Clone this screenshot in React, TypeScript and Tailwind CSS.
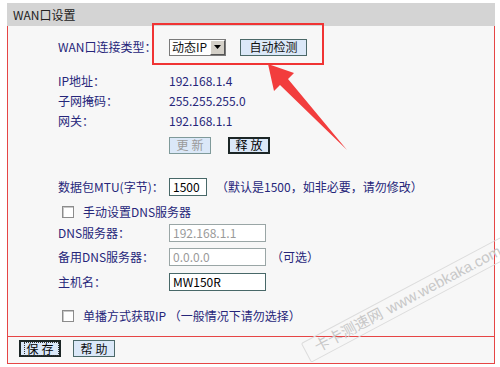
import React from 'react';

const Row: React.FC<{ label: string; className?: string; children?: React.ReactNode }> = ({ label, className = '', children }) => (
  <div className={`flex items-center h-[20px] ${className}`}>
    <div className="w-[111px] shrink-0 text-[#26267a]">{label}</div>
    {children}
  </div>
);

const Btn: React.FC<{ text: string; strong?: boolean; disabled?: boolean; focus?: boolean }> = ({ text, strong, disabled, focus }) => (
  <div
    className={`w-[42px] h-[17px] flex items-center justify-center bg-[#dbe8f8] text-[12px] tracking-[3px] pl-[3px] ${
      strong ? 'border-2 border-[#1c2626] text-black' : 'border border-[#4b6868]'
    } ${disabled ? 'text-[#9a9a9a] border-[#7f9a9a]' : 'text-[#111]'}`}
  >
    <span className={focus ? 'outline outline-1 outline-dotted outline-[#333] px-[1px] leading-[12px]' : ''}>{text}</span>
  </div>
);

const Check: React.FC = () => (
  <div className="w-[12px] h-[12px] border border-[#8c8c8c] bg-white shadow-[inset_1px_1px_0_#c8c8c8] shrink-0" />
);

export default function App() {
  return (
    <div className="relative w-[500px] h-[367px] bg-white overflow-hidden text-[12px] font-['SimSun','Noto_Sans_CJK_SC',sans-serif]">
      <div className="ml-[7px] mt-[3px] w-[488px]">
        <div className="h-[23px] bg-[#d4d4d4] pl-[6px] flex items-center text-[#222]">WAN口设置</div>
        <div className="h-[338px] bg-[#f7f7f7] border-x border-b border-[#e64545] flex flex-col">
          <div className="pl-[50px]">
            <Row label="WAN口连接类型：" className="mt-[11px]">
              <div className="w-[57px] h-[17px] bg-white border border-[#7a7a7a] flex items-center justify-between text-[#111]">
                <span className="pl-[2px]">动态IP</span>
                <div className="w-[15px] h-[15px] bg-[#d4d0c8] border border-t-white border-l-white border-r-[#555] border-b-[#555] flex items-center justify-center">
                  <svg width="7" height="4" viewBox="0 0 7 4"><path d="M0 0h7L3.5 4z" fill="#000" /></svg>
                </div>
              </div>
              <div className="ml-[14px] w-[67px] h-[17px] border border-[#4b6868] bg-[#dbe8f8] flex items-center justify-center text-[#111]">自动检测</div>
            </Row>
            <Row label="IP地址：" className="mt-[14px]"><span className="text-[#26267a]">192.168.1.4</span></Row>
            <Row label="子网掩码："><span className="text-[#26267a]">255.255.255.0</span></Row>
            <Row label="网关："><span className="text-[#26267a]">192.168.1.1</span></Row>
            <div className="flex items-center h-[20px] mt-[4px] pl-[111px] gap-[17px]">
              <Btn text="更新" disabled />
              <Btn text="释放" strong />
            </div>
            <Row label="数据包MTU(字节)：" className="mt-[22px]">
              <div className="w-[38px] h-[18px] bg-white border border-[#486868] flex items-center pl-[3px] text-black">1500</div>
              <span className="ml-[9px] text-[#26267a]">（默认是1500，如非必要，请勿修改）</span>
            </Row>
            <div className="flex items-center h-[20px] mt-[5px] pl-[4px]">
              <Check />
              <span className="ml-[9px] text-[#26267a]">手动设置DNS服务器</span>
            </div>
            <Row label="DNS服务器：" className="mt-[1px]">
              <div className="w-[97px] h-[18px] bg-white border border-[#9aa6a6] flex items-center pl-[3px] text-[#9a9a9a]">192.168.1.1</div>
            </Row>
            <Row label="备用DNS服务器：" className="mt-[4px]">
              <div className="w-[97px] h-[18px] bg-white border border-[#9aa6a6] flex items-center pl-[3px] text-[#9a9a9a]">0.0.0.0</div>
              <span className="ml-[5px] text-[#26267a]">（可选）</span>
            </Row>
            <Row label="主机名：" className="mt-[5px]">
              <div className="w-[97px] h-[18px] bg-white border border-[#486868] flex items-center pl-[3px] text-black">MW150R</div>
            </Row>
            <div className="flex items-center h-[20px] mt-[14px] pl-[4px]">
              <Check />
              <span className="ml-[9px] text-[#26267a]">单播方式获取IP （一般情况下请勿选择）</span>
            </div>
          </div>
          <div className="mt-[10px] border-t border-[#e64545]" />
          <div className="flex items-center gap-[12px] pl-[11px] pt-[3px]">
            <Btn text="保存" strong focus />
            <Btn text="帮助" />
          </div>
        </div>
      </div>

      {/* red highlight box */}
      <div className="absolute left-[152px] top-[23px] w-[172px] h-[42px] border-2 border-[#f03434]" />

      {/* red arrow */}
      <svg className="absolute left-0 top-0" width="500" height="367" viewBox="0 0 500 367">
        <polygon points="268,64 294,73 288,79 347,150 280,85 274,91" fill="#f23d3d" />
      </svg>

      {/* watermark */}
      <div className="absolute left-[306px] top-[342px] -rotate-[28deg] origin-left flex items-center gap-[6px] px-[10px] h-[22px] border border-[#dcdcdc] rounded-[2px] text-[15px] text-[#c8c8c8] whitespace-nowrap font-['Liberation_Sans','Noto_Sans_CJK_SC',sans-serif]">
        <span>卡卡测速网</span>
        <span>www.webkaka.com</span>
      </div>
    </div>
  );
}
